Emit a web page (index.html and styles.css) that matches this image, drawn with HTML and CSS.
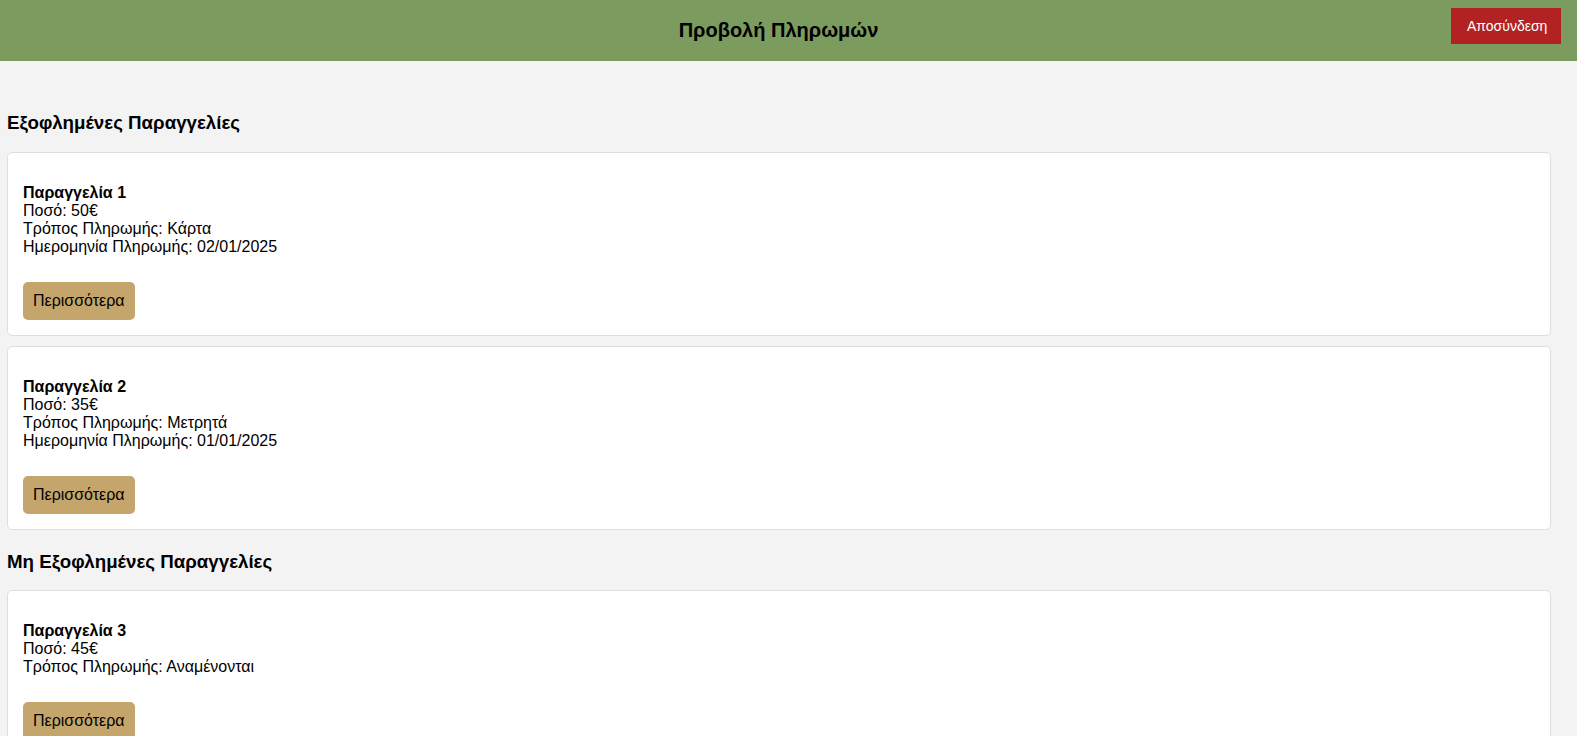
FILE: index.html
```html
<!DOCTYPE html>
<html lang="el">
<head>
<meta charset="utf-8">
<title>Προβολή Πληρωμών</title>
<link rel="stylesheet" href="styles.css">
</head>
<body>
<header class="topbar">
  <div class="topbar-spacer"></div>
  <h1 class="topbar-title">Προβολή Πληρωμών</h1>
  <div class="topbar-actions">
    <button class="logout-btn">Αποσύνδεση</button>
  </div>
</header>
<main class="content">
  <h3 class="section-title">Εξοφλημένες Παραγγελίες</h3>
  <div class="order-card">
    <p class="order-info">
      <strong>Παραγγελία 1</strong><br>
      Ποσό: 50€<br>
      Τρόπος Πληρωμής: Κάρτα<br>
      Ημερομηνία Πληρωμής: 02/01/2025
    </p>
    <button class="more-btn">Περισσότερα</button>
  </div>
  <div class="order-card">
    <p class="order-info">
      <strong>Παραγγελία 2</strong><br>
      Ποσό: 35€<br>
      Τρόπος Πληρωμής: Μετρητά<br>
      Ημερομηνία Πληρωμής: 01/01/2025
    </p>
    <button class="more-btn">Περισσότερα</button>
  </div>
  <h3 class="section-title section-title--next">Μη Εξοφλημένες Παραγγελίες</h3>
  <div class="order-card">
    <p class="order-info">
      <strong>Παραγγελία 3</strong><br>
      Ποσό: 45€<br>
      Τρόπος Πληρωμής: Αναμένονται
    </p>
    <button class="more-btn">Περισσότερα</button>
  </div>
</main>
</body>
</html>
```
FILE: styles.css
```css
html::-webkit-scrollbar {
  width: 5px;
  background: #fafafa;
}
html::-webkit-scrollbar-thumb {
  background: #8a8a8a;
  border-radius: 2px;
}

body {
  margin: 0;
  background: #f3f3f3;
  font-family: "Liberation Sans", Arial, sans-serif;
  font-size: 16px;
  color: #000;
}

.topbar {
  display: grid;
  grid-template-columns: 1fr auto 1fr;
  height: 61px;
  padding-right: 20px;
  background: #7b9b5f;
}

.topbar-title {
  margin: 0;
  align-self: center;
  font-size: 20px;
  font-weight: bold;
}

.topbar-actions {
  display: flex;
  justify-content: flex-end;
  align-items: flex-start;
  padding-top: 8px;
  margin-right: -4px;
}

.logout-btn {
  background: #b22222;
  color: #fff;
  border: none;
  font-family: "Liberation Sans", Arial, sans-serif;
  font-size: 14px;
  height: 36px;
  padding: 0 16px;
  width: 110px;
  cursor: pointer;
}

.content {
  padding: 32px 26px 0 7px;
}

.section-title {
  margin: 18.72px 0;
  font-size: 18.72px;
  font-weight: bold;
}

.section-title--next {
  margin: 21px 0 17px;
}

.order-card {
  background: #fff;
  border: 1px solid #dedede;
  border-radius: 5px;
  padding: 15px;
  margin-bottom: 10px;
}

.order-info {
  margin: 16px 0 16px;
  line-height: 18px;
}

.more-btn {
  margin-top: 10px;
  background: #c4a66c;
  color: #000;
  border: none;
  border-radius: 5px;
  font-family: "Liberation Sans", Arial, sans-serif;
  font-size: 16px;
  padding: 10px;
  height: 38px;
  cursor: pointer;
}
```
